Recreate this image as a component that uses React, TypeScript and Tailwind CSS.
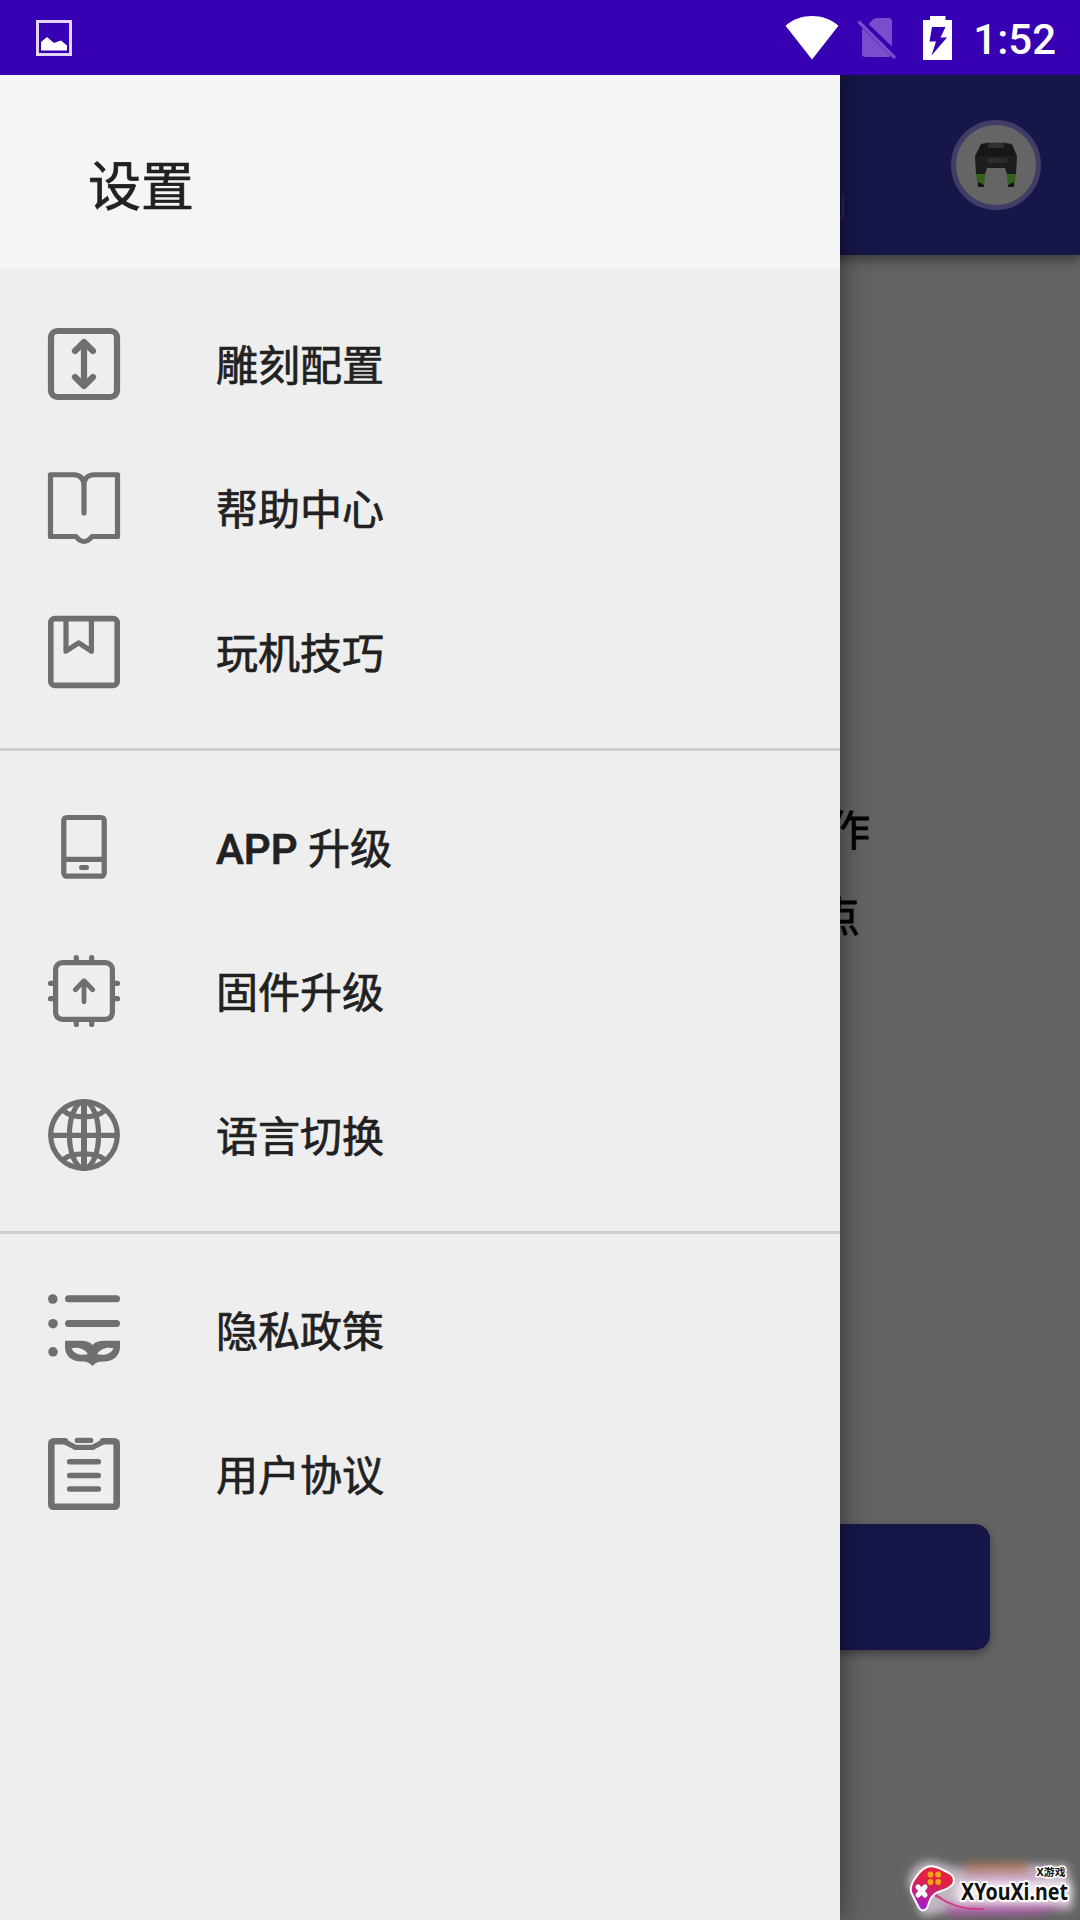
import React from 'react';

type IconProps = { children: React.ReactNode };

const MenuIcon: React.FC<IconProps> = ({ children }) => (
    <svg
        className="w-[72px] h-[72px] shrink-0 text-[#6f6f6f] overflow-visible"
        viewBox="0 0 72 72"
        fill="none"
        stroke="currentColor"
        strokeWidth="5.2"
        strokeLinecap="round"
        strokeLinejoin="round"
    >
        {children}
    </svg>
);

const EngraveIcon = () => (
    <MenuIcon>
        <g strokeWidth="6.2">
            <rect x="3" y="3" width="66" height="66" rx="6.5" />
            <path d="M36 14.5V57.5M27 23l9-9 9 9M27 49l9 9 9-9" />
        </g>
    </MenuIcon>
);

const BookIcon = () => (
    <MenuIcon>
        <path d="M36 13C36 7 32 2.75 26 2.75H2.5V64.5H28C30 67 32 69.5 36 69.5S42 67 44 64.5H69.5V2.75H46C40 2.75 36 7 36 13V41" />
    </MenuIcon>
);

const TipsIcon = () => (
    <MenuIcon>
        <rect x="2.8" y="2.6" width="66.4" height="66.8" rx="4" strokeWidth="5.6" />
        <path d="M18 4V35.2l12.7-8.4L43.4 35.2V4" />
    </MenuIcon>
);

const PhoneIcon = () => (
    <MenuIcon>
        <rect x="15.8" y="6.5" width="40.4" height="58.7" rx="3" />
        <path d="M16 48.3H56" />
        <rect x="31" y="54" width="10" height="5" rx="2.5" fill="currentColor" stroke="none" />
    </MenuIcon>
);

const ChipIcon = () => (
    <MenuIcon>
        <rect x="7.6" y="7.6" width="56.8" height="56.8" rx="7" />
        <path d="M28.3 2.5V6M43.7 2.5V6M28.3 66v3.5M43.7 66v3.5M2.5 28.3H6M2.5 43.7H6M66 28.3h3.5M66 43.7h3.5" />
        <path strokeWidth="4.8" d="M36 26V46.8M27.3 34.7l8.7-8.9 8.7 8.9" />
    </MenuIcon>
);

const GlobeIcon = () => (
    <MenuIcon>
        <circle cx="36" cy="36" r="33.3" />
        <ellipse cx="36" cy="36" rx="14.6" ry="33.3" />
        <path strokeWidth="6" d="M36 3V69" />
        <path d="M3 36.3H69M15 11.5C25 20 47 20 57 11.5M15 60.5C25 53 47 53 57 60.5" />
    </MenuIcon>
);

const PrivacyIcon = () => (
    <MenuIcon>
        <g fill="currentColor" stroke="none">
            <circle cx="4.8" cy="5" r="4.8" />
            <circle cx="5" cy="29.7" r="4.8" />
            <circle cx="5" cy="57.8" r="4.8" />
            <path
                fillRule="evenodd"
                d="M18 46.7H33C38 46.7 42 48 44.5 51C47 48 51 46.7 56 46.7H71Q72 46.7 72 48V53C72 62 65 67.5 56 67.5C51 67.5 48.5 68 44.5 72C40.5 68 38 67.5 33 67.5C24 67.5 17 62 17 53V48Q17 46.7 18 46.7ZM23.5 54.3C30 52.3 37 55 40 60C34 62 26 60.5 23.5 54.3ZM65.5 54.3C59 52.3 52 55 49 60C55 62 63 60.5 65.5 54.3Z"
            />
        </g>
        <path strokeWidth="7" d="M20.5 4.7H68.5M20.5 29.4H68.5" />
    </MenuIcon>
);

const AgreementIcon = () => (
    <MenuIcon>
        <path strokeWidth="6.6" d="M17 3.3H6Q3.3 3.3 3.3 6V66Q3.3 68.7 6 68.7H66Q68.7 68.7 68.7 66V6Q68.7 3.3 66 3.3H55" />
        <path d="M15 2.9L27.5 9.4H44.5L57 2.9M29.3 2.4H42.7" />
        <path strokeWidth="5.4" d="M21.6 23.7H50.4M21.6 37.5H50.4M21.6 51H50.4" />
    </MenuIcon>
);

interface MenuEntry {
    label: React.ReactNode;
    icon: React.FC;
}

const GROUPS: MenuEntry[][] = [
    [
        { label: '雕刻配置', icon: EngraveIcon },
        { label: '帮助中心', icon: BookIcon },
        { label: '玩机技巧', icon: TipsIcon },
    ],
    [
        { label: <><span className="font-medium">APP</span> 升级</>, icon: PhoneIcon },
        { label: '固件升级', icon: ChipIcon },
        { label: '语言切换', icon: GlobeIcon },
    ],
    [
        { label: '隐私政策', icon: PrivacyIcon },
        { label: '用户协议', icon: AgreementIcon },
    ],
];

const StatusBar = () => (
    <div className="h-[75px] bg-[#3700b3] flex items-center justify-between pl-9 pr-6 text-white">
        <svg className="w-9 h-9" viewBox="0 0 36 36" fill="none">
            <rect x="1.5" y="1.5" width="33" height="33" stroke="#e3d4fa" strokeWidth="3" />
            <path d="M5 30.5V22L11 17l7 6 7-2.5 6 5v5Z" fill="#fff" />
        </svg>
        <div className="flex items-center">
            <svg className="w-[54px] h-[44px]" viewBox="0 0 54 44" fill="#fff">
                <path d="M27 43.5L.5 9.8C15-3.2 39-3.2 53.5 9.8Z" />
            </svg>
            <svg className="w-10 h-[42px] ml-[18px] mt-[2px]" viewBox="0 0 40 42" fill="#7a4dcd">
                <path d="M11.5 6L16 1.5Q17.5 0 20 0H31.5Q35 0 35 3.5V28.5Z" />
                <path d="M5 10L33.5 38Q33 39 31 39H8.5Q5 39 5 35.5Z" />
                <path d="M1.5 3.5L38 40" stroke="#7a4dcd" strokeWidth="3.2" />
            </svg>
            <svg className="w-[29px] h-[44px] ml-[26px]" viewBox="0 0 29 44">
                <path d="M7 0H22.5V4H29V44H0V4H7Z" fill="#fff" />
                <path d="M9 11H22.5L17.5 21.5H24L8.5 39.5L13 25.5H6.5Z" fill="#3700b3" />
            </svg>
            <span className="ml-[21px] font-['Roboto'] font-medium text-[42px] leading-[75px] pt-[3px]">1:52</span>
        </div>
    </div>
);

const DeviceAvatar = () => (
    <div className="w-[90px] h-[90px] rounded-full bg-[#656565] border-[5px] border-[#403e66] flex items-center justify-center">
        <svg className="w-[42px] h-[46px]" viewBox="0 0 42 46">
            <path d="M1 32H10.5L9 44Q8.5 45 4 45L2.5 43Z" fill="#356020" />
            <path d="M41 32H31.5L33 44Q33.5 45 38 45L39.5 43Z" fill="#356020" />
            <path d="M3 40L9 43V45H3ZM39 40L33 43V45H39Z" fill="#151515" />
            <path d="M6 2L12 .8H30L37 2L42 14L41 32H32L30 26H12L10 32H1L0 14Z" fill="#1d1d1d" />
            <path d="M1 14L6 3H36L41 14Z" fill="#161616" />
            <rect x="13" y="1" width="16" height="5" rx="2.5" fill="#303030" />
            <rect x="12" y="16" width="20" height="5" fill="#2c2c2c" />
        </svg>
    </div>
);

/* Home screen with the drawer scrim colours applied */
const HomePage = () => (
    <div className="h-full bg-[#636363] flex flex-col">
        <div className="h-[180px] bg-[#161648] shadow-[0_4px_12px_rgba(0,0,0,0.45)] flex items-center justify-end pr-[39px]">
            <span className="text-[27px] leading-none text-[#2a2a5a] mr-[105px] pt-[87px]">刻</span>
            <DeviceAvatar />
        </div>
        <div className="mt-[534px] pr-[210px] text-[42px] leading-[86px] text-black text-right [-webkit-text-stroke:0.8px_currentColor]">
            <p>作</p>
            <p className="pr-[10px]">点</p>
        </div>
        <div className="mt-[563px] mx-[90px] h-[126px] rounded-[15px] bg-[#161648] shadow-[0_4px_8px_rgba(0,0,0,0.35)]" />
    </div>
);

const Drawer = () => (
    <aside className="absolute left-0 top-[75px] bottom-0 w-[840px] bg-[#eeeeee] text-[#212121] shadow-[0_0_26px_rgba(0,0,0,0.5)] [-webkit-text-stroke:0.7px_currentColor]">
        <div className="h-[193px] bg-[#f5f5f5] pl-[88px] flex items-center">
            <h1 className="text-[53px] leading-none pt-[33px]">设置</h1>
        </div>
        {GROUPS.map((group, i) => (
            <ul key={i} className={i > 0 ? 'py-6 border-t-[3px] border-[#d0d0d0]' : 'py-6'}>
                {group.map(({ label, icon: Icon }, j) => (
                    <li key={j} className="h-36 flex items-center pl-12">
                        <Icon />
                        <span className="ml-24 pt-[5px] text-[42px] leading-none">{label}</span>
                    </li>
                ))}
            </ul>
        ))}
    </aside>
);

const SiteBadge = () => (
    <svg className="absolute right-0 bottom-0 w-[190px] h-[80px]" viewBox="0 0 190 80">
        <defs>
            <linearGradient id="pad" x1="0.6" y1="0" x2="0.3" y2="1">
                <stop offset="0.3" stopColor="#e0243f" />
                <stop offset="0.6" stopColor="#c81e78" />
                <stop offset="1" stopColor="#a21edb" />
            </linearGradient>
            <filter id="glow" x="-30%" y="-60%" width="160%" height="220%">
                <feGaussianBlur stdDeviation="4.5" />
            </filter>
        </defs>
        <g filter="url(#glow)">
            <path d="M18 42Q22 21 42 21L68 28L144 25H178L182 62V70H66L32 77Z" fill="#d8cad8" opacity="0.8" />
            <path d="M76 22H138V34H74Z" fill="#b8744f" opacity="0.65" />
            <path d="M74 34H150V44H70Z" fill="#c99ac6" opacity="0.7" />
            <path d="M52 64L178 63L150 74L60 76Z" fill="#b956b4" opacity="0.75" />
            <path d="M66 42H182V62H66Z" fill="#f4eaf4" />
        </g>
        <path d="M46 54Q64 70 94 69Q70 72 45 56Z" fill="#d23b80" stroke="#d23b80" />
        <path
            d="M37 27Q42 25 49 28L59 33Q66 37 63 44Q60 48 51 51Q43 53 40 60L37 68Q33 73 29 68L21 52Q20 46 24 40Q30 30 37 27Z"
            fill="url(#pad)"
            stroke="#fff"
            strokeWidth="2"
        />
        <path d="M28 47L35 55M35 47L28 55" stroke="#fff" strokeWidth="5" strokeLinecap="round" />
        <g fill="#f6a11c">
            <circle cx="40.5" cy="34.5" r="2.9" />
            <circle cx="48.2" cy="34.5" r="2.9" />
            <circle cx="40.5" cy="42" r="2.9" />
            <circle cx="48.2" cy="42" r="2.9" />
        </g>
        <g fill="#111" stroke="#fff" strokeLinejoin="round" paintOrder="stroke">
            <text x="71" y="60" textLength="107" lengthAdjust="spacingAndGlyphs" strokeWidth="4" className="font-['Noto_Sans'] font-bold text-[23px]">XYouXi.net</text>
            <text x="146.500" y="36" textLength="29" lengthAdjust="spacingAndGlyphs" strokeWidth="3" className="font-['Noto_Sans','Noto_Sans_CJK_SC'] font-bold text-[10.5px]">X游戏</text>
        </g>
    </svg>
);

export default function App() {
    return (
        <div className="relative w-[1080px] h-[1920px] overflow-hidden flex flex-col font-['Roboto','Noto_Sans_CJK_SC',sans-serif]">
            <div className="relative z-10">
                <StatusBar />
            </div>
            <div className="flex-1">
                <HomePage />
            </div>
            <Drawer />
            <SiteBadge />
        </div>
    );
}
